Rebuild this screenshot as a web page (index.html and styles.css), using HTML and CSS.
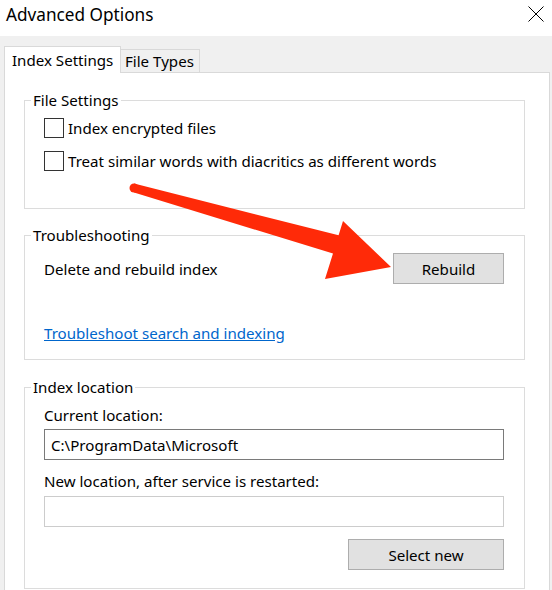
FILE: index.html
```html
<!DOCTYPE html>
<html>
<head>
<meta charset="utf-8">
<link rel="stylesheet" href="styles.css">
</head>
<body>
<div class="titlebar">
  <span class="title">Advanced Options</span>
  <svg class="close" width="16" height="16" viewBox="0 0 16 16"><path d="M0.5 0.5 L15.5 15.5 M15.5 0.5 L0.5 15.5" stroke="#000" stroke-width="1" fill="none"/></svg>
</div>
<div class="dialog">
  <div class="tabs">
    <div class="tab active">Index Settings</div>
    <div class="tab">File Types</div>
  </div>
  <div class="panel">
    <div class="group g1">
      <span class="legend">File Settings</span>
      <div class="check first"><span class="box"></span><span>Index encrypted files</span></div>
      <div class="check second"><span class="box"></span><span>Treat similar words with diacritics as different words</span></div>
    </div>
    <div class="group g2">
      <span class="legend">Troubleshooting</span>
      <div class="row">
        <span>Delete and rebuild index</span>
        <span class="btn rebuild">Rebuild</span>
      </div>
      <a class="link">Troubleshoot search and indexing</a>
    </div>
    <div class="group g3">
      <span class="legend">Index location</span>
      <div class="label first">Current location:</div>
      <div class="input cur">C:\ProgramData\Microsoft</div>
      <div class="label second">New location, after service is restarted:</div>
      <div class="input newloc"></div>
      <div class="btnrow"><span class="btn select">Select new</span></div>
    </div>
  </div>
</div>
<svg class="arrow" width="552" height="590" viewBox="0 0 552 590">
  <polygon fill="#ff2a08" points="134,183.5 338.6,235.3 343,221 391,267 325,279 333,253.5 134,192.5"/>
  <circle fill="#ff2a08" cx="134" cy="188" r="4.5"/>
</svg>
</body>
</html>
```

FILE: styles.css
```css
* { box-sizing: border-box; }
body {
  margin: 0;
  width: 552px;
  height: 590px;
  overflow: hidden;
  position: relative;
  background: #f0f0f0;
  font-family: "Noto Sans", "Open Sans", sans-serif;
  font-size: 15.1px;
  color: #000;
}
.titlebar {
  height: 36px;
  background: #fff;
  display: flex;
  justify-content: space-between;
  align-items: flex-start;
  padding: 0 8px 0 6px;
}
.title {
  font-size: 17.2px;
  line-height: 22px;
  margin-top: 4px;
}
.close { margin-top: 6px; }
.dialog {
  padding: 10px 0 0 4px;
}
.tabs {
  display: flex;
  align-items: flex-end;
  height: 27px;
  margin-bottom: -1px;
  position: relative;
  z-index: 1;
}
.tab {
  height: 23px;
  width: 79px;
  margin-bottom: 1px;
  background: #f0f0f0;
  border: 1px solid #d9d9d9;
  border-left: none;
  border-bottom: none;
  padding-left: 4px;
  display: flex;
  align-items: center;
  line-height: 20px;
}
.tab.active {
  height: 27px;
  width: 117px;
  margin-bottom: 0;
  background: #fff;
  border-left: 1px solid #d9d9d9;
  padding-left: 7px;
}
.panel {
  width: 546px;
  height: 530px;
  background: #fff;
  border: 1px solid #d9d9d9;
  padding: 27px 24px 0 19px;
}
.group {
  border: 1px solid #dcdcdc;
  padding: 0 20px 0 19px;
}
.legend {
  display: block;
  width: fit-content;
  background: #fff;
  margin: -10px 0 0 -13px;
  padding: 0 2px;
  line-height: 18px;
}
.g1 { padding-bottom: 37px; }
.check {
  display: flex;
  align-items: center;
  height: 20px;
  line-height: 20px;
}
.check.first { margin-top: 9px; }
.check.second { margin-top: 13px; }
.box {
  width: 20px;
  height: 20px;
  border: 1px solid #333;
  background: #fff;
  margin-right: 4px;
  flex: none;
}
.g2 { margin-top: 26px; padding-bottom: 16px; }
.row {
  display: flex;
  justify-content: space-between;
  align-items: center;
  height: 31px;
  margin-top: 9px;
}
.btn {
  display: flex;
  align-items: center;
  justify-content: center;
  height: 31px;
  background: #e1e1e1;
  border: 1px solid #adadad;
}
.rebuild { width: 111px; }
.link {
  display: block;
  margin-top: 39px;
  line-height: 20px;
  color: #0066cc;
  text-decoration: underline;
  width: fit-content;
}
.g3 { margin-top: 27px; padding-bottom: 18px; }
.label { line-height: 20px; }
.label.first { margin-top: 9px; }
.label.second { margin-top: 11px; }
.input {
  height: 31px;
  background: #fff;
  display: flex;
  align-items: center;
  padding-left: 6px;
}
.cur { margin-top: 4px; border: 1px solid #7a7a7a; }
.newloc { margin-top: 5px; border: 1px solid #cccccc; }
.btnrow {
  display: flex;
  justify-content: flex-end;
  margin-top: 12px;
}
.select { width: 156px; }
.arrow {
  position: absolute;
  left: 0;
  top: 0;
  pointer-events: none;
}
```
